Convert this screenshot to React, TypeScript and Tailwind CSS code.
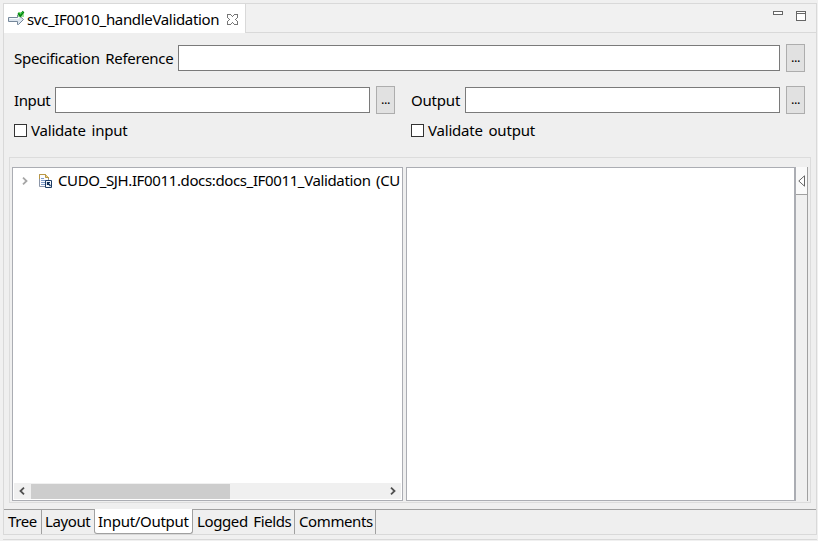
import type { ReactNode } from "react";

function Label({ children, className = "" }: { children: ReactNode; className?: string }) {
  return <span className={`block shrink-0 whitespace-pre leading-[20px] ${className}`}>{children}</span>;
}

function BrowseButton() {
  return (
    <button className="ml-[6px] flex h-[28px] w-[19px] shrink-0 items-end justify-center border border-[#adadad] bg-[#e1e1e1] pb-[7px]">
      <span className="block h-[14px] text-[13px] leading-[14px] tracking-[-0.5px]">...</span>
    </button>
  );
}

function Field({ className }: { className: string }) {
  return <input className={`block h-[26px] shrink-0 border border-[#7a7a7a] bg-white outline-none ${className}`} />;
}

function CheckBox() {
  return <span className="block size-[13px] shrink-0 border border-[#333333] bg-white" />;
}

function ServiceIcon() {
  return (
    <svg className="shrink-0" width="17" height="16" viewBox="0 0 17 16" fill="none">
      <path d="M.5 7.5h9v-2.5h1l5 4.5-5 5h-1v-3h-9z" fill="#dce5ee" stroke="#75879a" />
      <path d="M1.5 8.5h9v-2" stroke="#f8fbfd" />
      <path d="M10 2h6v5h-6z" fill="#9be592" />
      <path d="M10.3 3.2l2 2.6L15.5 1.5" stroke="#087c16" strokeWidth="2.2" />
      <path d="M11 3l1.3 1.7L15 2" stroke="#18c528" strokeWidth="1" />
    </svg>
  );
}

function CloseIcon() {
  return (
    <svg width="11" height="11" viewBox="0 0 11 11" fill="white" stroke="#777" shapeRendering="crispEdges">
      <path d="M.5.5h3l2 2 2-2h3v3l-2 2 2 2v3h-3l-2-2-2 2h-3v-3l2-2-2-2z" />
    </svg>
  );
}

function DocumentIcon() {
  return (
    <svg className="shrink-0" width="14" height="15" viewBox="0 0 14 15" fill="none">
      <path d="M.5.5h6l3 3v9h-9z" fill="#fbfcff" stroke="#8c96a8" />
      <path d="M.5 5V.5h6l3 3V5" stroke="#b99745" />
      <path d="M6.5.5v3h3" fill="#e9ce83" stroke="#b99745" />
      <path d="M2 4.5h3M2 6.5h6M2 8.5h5M2 10.5h4" stroke="#7e9bc8" />
      <path d="M6.5 6.5h6v7h-6z" fill="#f5f8fc" stroke="#1d3d66" />
      <path d="M8.5 11V8.5H11M9 9l2.5 3" stroke="#102f58" strokeWidth="1.2" />
    </svg>
  );
}

function Chevron({ left = false, color = "#505050" }: { left?: boolean; color?: string }) {
  return (
    <svg width="6" height="8" viewBox="0 0 6 8" fill="none" stroke={color} strokeWidth="1.8">
      <path d={left ? "M5 .7L1.5 4 5 7.3" : "M1 .7L4.5 4 1 7.3"} />
    </svg>
  );
}

export default function App() {
  return (
    <div className="h-[541px] w-[818px] overflow-hidden bg-[#f0f0f0] pl-[3px] pt-[3px] font-['Noto_Sans','Open_Sans',sans-serif] text-[15px] text-black">
      <main className="flex h-[532px] w-[814px] flex-col border border-[#d9d9d9] bg-[#efefef]">
        <header className="flex h-[29px] shrink-0">
          <div className="flex w-[242px] shrink-0 items-start border-r border-[#d9d9d9] bg-white pl-[4px] pt-[6px]">
            <ServiceIcon />
            <Label className="-mt-px ml-[2px] w-[192px] tracking-[-0.33px]">svc_IF0010_handleValidation</Label>
            <span className="ml-[8px] mt-[4px] block"><CloseIcon /></span>
          </div>
          <div className="flex grow justify-end border-b border-[#d9d9d9] bg-[#f1f1f1] pr-[10px] pt-[7px]">
            <span className="block h-[4px] w-[10px] border border-[#666] bg-white" />
            <span className="ml-[13px] block size-[10px] border border-[#666] bg-white"><span className="mt-px block h-px bg-[#666]" /></span>
          </div>
        </header>

        <section className="h-[124px] shrink-0 pl-[10px] pt-[11px]">
          <div className="flex h-[28px] items-center">
            <Label className="w-[164px] tracking-[-0.28px] [word-spacing:2px]">Specification Reference</Label>
            <Field className="w-[602px]" />
            <BrowseButton />
          </div>
          <div className="mt-[14px] flex h-[28px] items-center">
            <Label className="w-[41px] tracking-[-0.4px]">Input</Label>
            <Field className="w-[315px]" />
            <BrowseButton />
            <Label className="ml-[16px] w-[54px] tracking-[-0.2px]">Output</Label>
            <Field className="w-[315px]" />
            <BrowseButton />
          </div>
          <div className="mt-[6px] flex h-[20px] items-center">
            <div className="flex w-[397px] items-center gap-[4px]"><CheckBox /><Label className="tracking-[-0.2px] [word-spacing:2px]">Validate input</Label></div>
            <div className="flex items-center gap-[4px]"><CheckBox /><Label className="tracking-[-0.2px] [word-spacing:2px]">Validate output</Label></div>
          </div>
        </section>

        <section className="ml-[5px] flex h-[346px] w-[802px] shrink-0 border border-[#dcdcdc] pl-[2px] pt-[9px]">
          <div className="flex h-[334px] w-[391px] shrink-0 flex-col justify-between border border-[#abadb3] bg-white">
            <div className="flex h-[26px] items-center pl-[9px]">
              <span className="block w-[17px] shrink-0"><Chevron color="#a6a6a6" /></span>
              <DocumentIcon />
              <Label className="-mt-[2px] ml-[5px] tracking-[-0.37px] [word-spacing:2px]">CUDO_SJH.IF0011.docs:docs_IF0011_Validation (CU</Label>
            </div>
            <div className="mx-px mb-px flex h-[16px] items-center bg-[#f0f0f0]">
              <span className="flex w-[17px] justify-center pr-[2px]"><Chevron left /></span>
              <span className="block h-[15px] w-[199px] bg-[#cdcdcd]" />
              <span className="ml-auto mr-[5px]"><Chevron /></span>
            </div>
          </div>
          <div className="ml-[3px] h-[334px] w-[390px] shrink-0 border border-r-2 border-[#abadb3] bg-white" />
          <div className="h-[334px] w-[12px] shrink-0 border-r border-[#a0a0a0] bg-[#f0f0f0]">
            <div className="flex h-[28px] items-center justify-center border-b border-[#a0a0a0] bg-[#fafafa]">
              <svg width="7" height="12" viewBox="0 0 7 12" fill="white" stroke="#666"><path d="M6.5.8v10.4L.8 6z" /></svg>
            </div>
          </div>
        </section>

        <nav className="mt-[6px] flex h-[25px] shrink-0">
          <Label className="h-[25px] w-[38px] border-r border-t border-[#a0a0a0] pl-[4px] pt-px tracking-[-0.4px]">Tree</Label>
          <Label className="h-[25px] w-[52px] border-t border-[#a0a0a0] pl-[3px] pt-px tracking-[-0.4px]">Layout</Label>
          <Label className="h-[25px] w-[99px] rounded-b-[3px] border-x border-b border-[#a0a0a0] bg-white pl-[3px] pt-[2px] tracking-[-0.3px]">Input/Output</Label>
          <Label className="h-[25px] w-[102px] border-r border-t border-[#a0a0a0] pl-[4px] pt-px tracking-[-0.38px] [word-spacing:2px]">Logged Fields</Label>
          <Label className="h-[25px] w-[81px] border-r border-t border-[#a0a0a0] pl-[4px] pt-px tracking-[-0.4px]">Comments</Label>
          <span className="block grow border-t border-[#a0a0a0]" />
        </nav>
      </main>
      <div className="mt-[4px] h-[2px] w-[814px] border-t border-[#d9d9d9]" />
    </div>
  );
}
